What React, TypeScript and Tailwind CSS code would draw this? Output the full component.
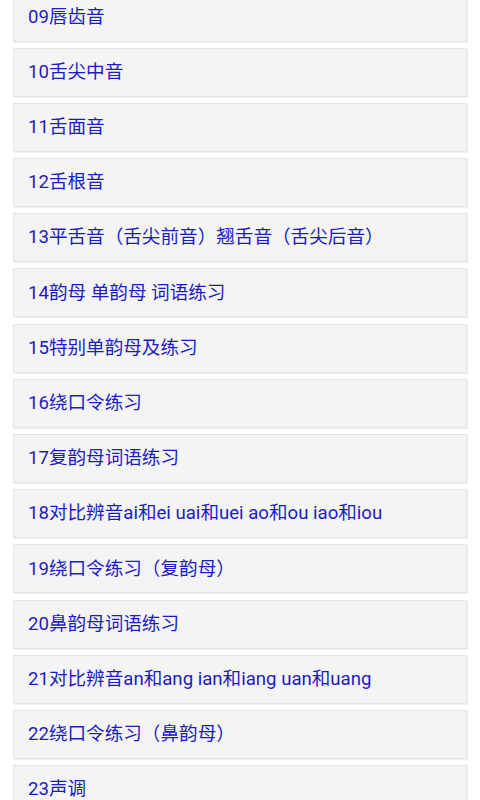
import React from 'react';

const lessons = [
  '09唇齿音',
  '10舌尖中音',
  '11舌面音',
  '12舌根音',
  '13平舌音（舌尖前音）翘舌音（舌尖后音）',
  '14韵母 单韵母 词语练习',
  '15特别单韵母及练习',
  '16绕口令练习',
  '17复韵母词语练习',
  '18对比辨音ai和ei uai和uei ao和ou iao和iou',
  '19绕口令练习（复韵母）',
  '20鼻韵母词语练习',
  '21对比辨音an和ang ian和iang uan和uang',
  '22绕口令练习（鼻韵母）',
  '23声调',
];

export default function App() {
  return (
    <div className="w-[480px] h-[800px] overflow-hidden bg-white">
      <div className="-mt-[7.5px] px-[13px] flex flex-col gap-[6.2px]">
        {lessons.map((title) => (
          <div
            key={title}
            className="h-[49px] shrink-0 flex items-center pl-[14px] bg-[#f4f4f4] border border-[#e4e4e4] shadow-[1px_1px_1px_rgba(0,0,0,0.06)]"
          >
            <span className="font-['Roboto','Noto_Sans_CJK_SC',sans-serif] text-[18.6px] leading-none text-[#1c1cc2]">
              {title}
            </span>
          </div>
        ))}
      </div>
    </div>
  );
}
